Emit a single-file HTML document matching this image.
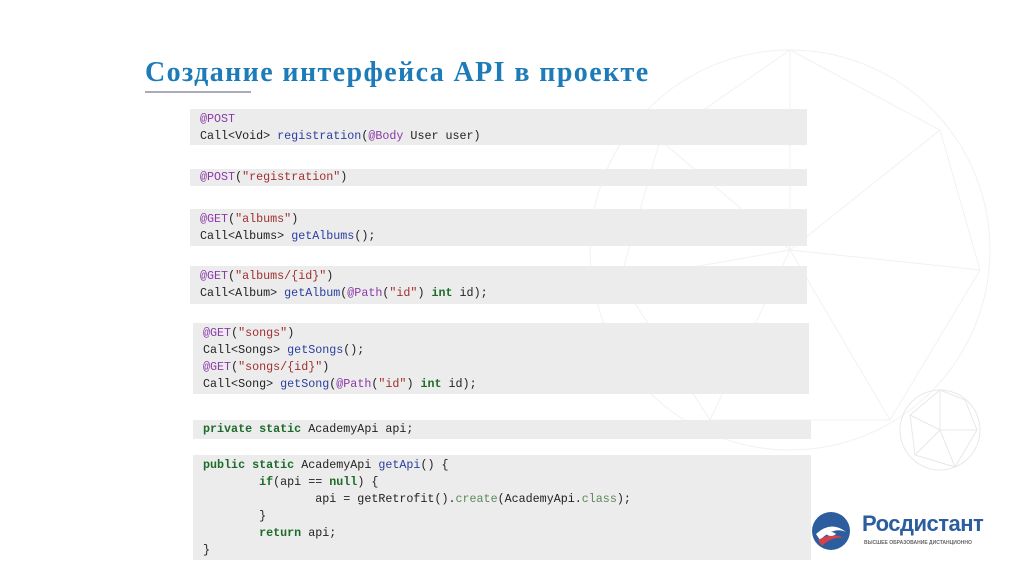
<!DOCTYPE html>
<html><head><meta charset="utf-8"><style>
body{margin:0;width:1024px;height:574px;background:#fff;position:relative;overflow:hidden;font-family:"Liberation Serif",serif}
.t{position:absolute;left:145px;top:57px;font:bold 28px "Liberation Serif","Noto Serif CJK SC",serif;color:#1c7bb8;white-space:nowrap;letter-spacing:1.4px}
.ul{position:absolute;left:145px;top:91px;width:106px;height:2px;background:#aab}
.b{position:absolute;background:#ececec;font:11.7px/17px "Liberation Mono",monospace;color:#222;white-space:pre;padding-left:10px;box-sizing:border-box}
.a{color:#8a3aa8}.s{color:#a03030}.f{color:#2a3fa0}.k{color:#1d6b2a;font-weight:bold}.g{color:#5a8a5a}
</style></head><body>
<svg style="position:absolute;left:560px;top:20px" width="460" height="460" stroke="#f1f1f1" fill="none" stroke-width="1">
<circle cx="230" cy="230" r="200"/><path d="M230 30L100 120L60 260L150 400L330 400L420 250L380 110Z M230 30L230 230L60 260 M230 230L420 250 M230 230L150 400 M230 230L330 400 M100 120L230 230L380 110"/></svg>
<svg style="position:absolute;left:895px;top:385px" width="90" height="90" stroke="#e8e8e8" fill="none"><circle cx="45" cy="45" r="40"/><path d="M45 5L15 30L20 70L60 82L82 45L70 15Z M45 5L45 45L15 30 M45 45L82 45 M45 45L20 70 M45 45L60 82"/></svg>
<div class="t">Создание интерфейса API в проекте</div>
<div class="ul"></div>
<div class="b" style="left:190px;top:109px;width:617px;height:36px;padding-top:2px"><span class="a">@POST</span>
Call&lt;Void&gt; <span class="f">registration</span>(<span class="a">@Body</span> User user)</div>
<div class="b" style="left:190px;top:169px;width:617px;height:17px"><span class="a">@POST</span>(<span class="s">"registration"</span>)</div>
<div class="b" style="left:190px;top:209px;width:617px;height:37px;padding-top:2px"><span class="a">@GET</span>(<span class="s">"albums"</span>)
Call&lt;Albums&gt; <span class="f">getAlbums</span>();</div>
<div class="b" style="left:190px;top:266px;width:617px;height:38px;padding-top:2px"><span class="a">@GET</span>(<span class="s">"albums/{id}"</span>)
Call&lt;Album&gt; <span class="f">getAlbum</span>(<span class="a">@Path</span>(<span class="s">"id"</span>) <span class="k">int</span> id);</div>
<div class="b" style="left:193px;top:323px;width:616px;height:71px;padding-top:2px"><span class="a">@GET</span>(<span class="s">"songs"</span>)
Call&lt;Songs&gt; <span class="f">getSongs</span>();
<span class="a">@GET</span>(<span class="s">"songs/{id}"</span>)
Call&lt;Song&gt; <span class="f">getSong</span>(<span class="a">@Path</span>(<span class="s">"id"</span>) <span class="k">int</span> id);</div>
<div class="b" style="left:193px;top:420px;width:618px;height:19px;padding-top:1px"><span class="k">private static</span> AcademyApi api;</div>
<div class="b" style="left:193px;top:455px;width:618px;height:105px;padding-top:2px"><span class="k">public static</span> AcademyApi <span class="f">getApi</span>() {
        <span class="k">if</span>(api == <span class="k">null</span>) {
                api = getRetrofit().<span class="g">create</span>(AcademyApi.<span class="g">class</span>);
        }
        <span class="k">return</span> api;
}</div>
<svg style="position:absolute;left:810px;top:510px" width="42" height="42"><circle cx="21" cy="21" r="19" fill="#2c5d9e"/><path d="M6 24Q21 10 36 22Q24 16 10 30Z" fill="#fff"/><path d="M8 30Q22 22 34 28Q22 26 12 36Z" fill="#d8404a"/><path d="M16 24Q21 20 26 24Q21 28 16 24Z" fill="#fff"/></svg>
<div style="position:absolute;left:862px;top:511px;font:bold 22px 'Liberation Sans',sans-serif;color:#2c5d9e;letter-spacing:-0.5px">Росдистант</div>
<div style="position:absolute;left:864px;top:540px;font:bold 5px 'Liberation Sans',sans-serif;color:#666;white-space:nowrap">ВЫСШЕЕ ОБРАЗОВАНИЕ ДИСТАНЦИОННО</div>
</body></html>
